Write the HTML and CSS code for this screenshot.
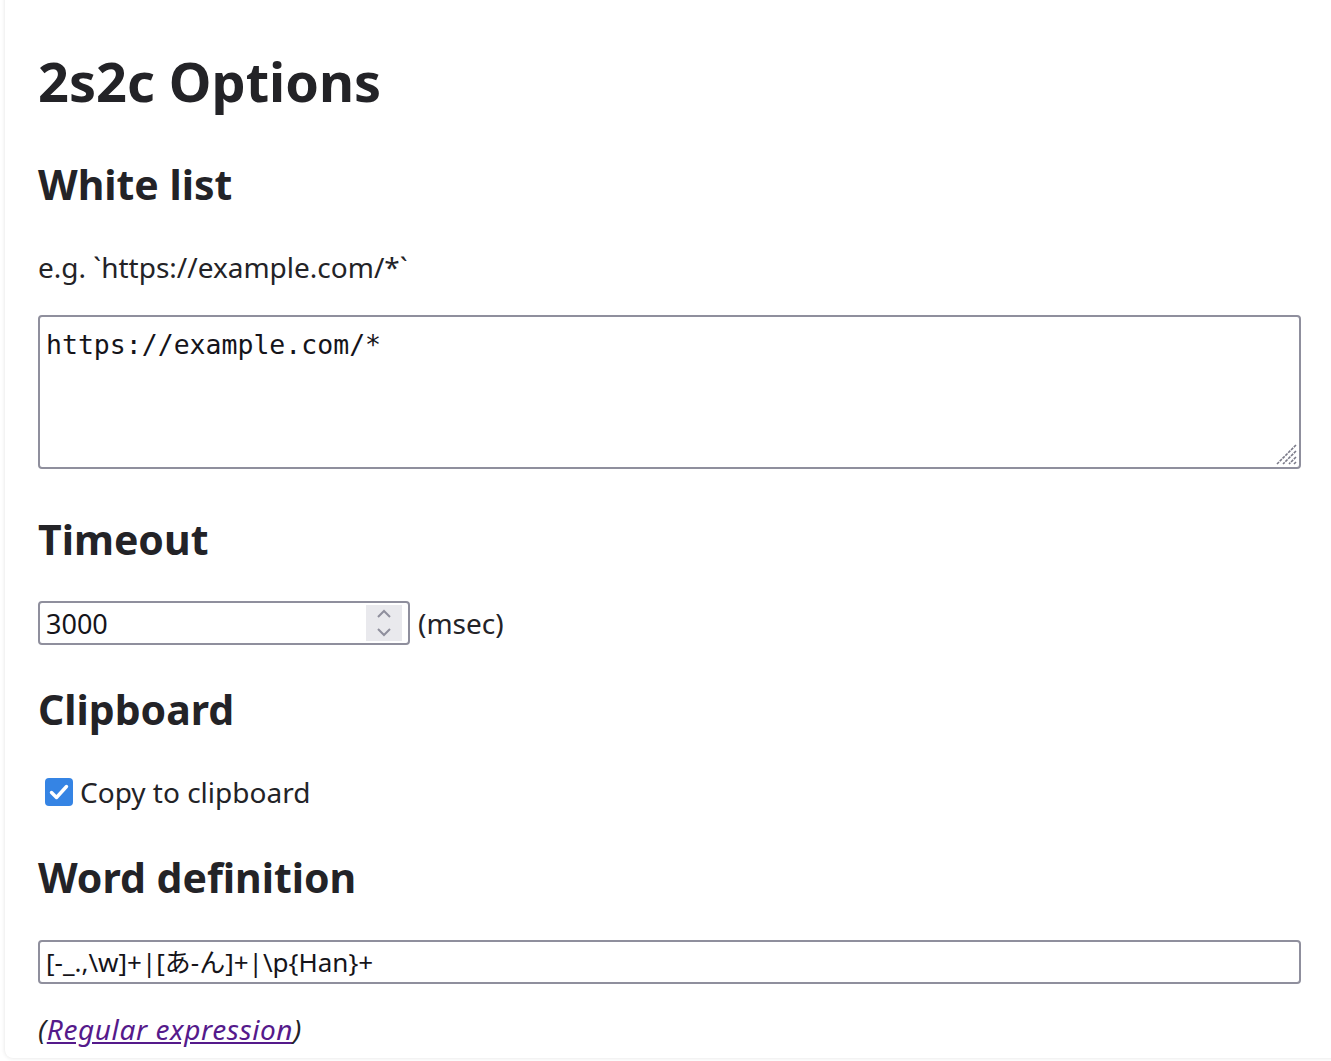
FILE: index.html
```html
<!DOCTYPE html>
<html lang="en">
<head>
<meta charset="utf-8">
<title>2s2c Options</title>
<link rel="stylesheet" href="styles.css">
</head>
<body>
<main class="card">
  <h1 class="title">2s2c Options</h1>

  <section class="section s-whitelist">
    <h2 class="heading">White list</h2>
    <p class="hint">e.g. `https://example.com/*`</p>
    <div class="textarea">
      <span class="mono">https://example.com/*</span>
      <svg class="grip" width="24" height="24" viewBox="0 0 24 24">
        <path d="M23 4 L4 23 M23 10 L10 23 M23 16 L16 23 M23 21 L21 23" stroke="#7a7a88" stroke-width="1.6" stroke-dasharray="3 1"/>
      </svg>
    </div>
  </section>

  <section class="section s-timeout">
    <h2 class="heading">Timeout</h2>
    <div class="row">
      <div class="number">
        <span class="value">3000</span>
        <span class="spinner">
          <svg width="20" height="34" viewBox="0 0 20 34">
            <path d="M4 11 L10 5 L16 11" fill="none" stroke="#8f8f9d" stroke-width="2"/>
            <path d="M4 23 L10 29 L16 23" fill="none" stroke="#8f8f9d" stroke-width="2"/>
          </svg>
        </span>
      </div>
      <span class="unit">(msec)</span>
    </div>
  </section>

  <section class="section s-clipboard">
    <h2 class="heading">Clipboard</h2>
    <label class="check">
      <span class="box">
        <svg width="28" height="28" viewBox="0 0 28 28">
          <path d="M6.5 14.5 L11.5 19.5 L21.5 8.5" fill="none" stroke="#fff" stroke-width="3.4" stroke-linecap="round" stroke-linejoin="round"/>
        </svg>
      </span>
      <span class="check-label">Copy to clipboard</span>
    </label>
  </section>

  <section class="section s-word">
    <h2 class="heading">Word definition</h2>
    <div class="text-input">[-_.,\w]+|[あ-ん]+|\p{Han}+</div>
    <p class="note">(<a class="link" href="#">Regular expression</a>)</p>
  </section>
</main>
</body>
</html>
```

FILE: styles.css
```css
html, body {
  margin: 0;
  padding: 0;
  overflow: hidden;
  background: #ffffff;
}

body {
  padding: 0 0 3px 5px;
  font-family: "Noto Sans", "Noto Sans CJK JP", sans-serif;
  color: #232327;
}

.card {
  margin-top: -20px;
  width: calc(100% + 20px);
  box-sizing: border-box;
  height: 1078px;
  padding: 20px 0 0 33px;
  background: #fff;
  border-radius: 8px;
  box-shadow: 0 0 4px rgba(0, 0, 0, 0.12);
}

.title {
  margin: 0;
  padding-top: 46px;
  font-size: 54px;
  line-height: 70px;
  font-weight: 700;
}

.heading {
  margin: 0;
  font-size: 41px;
  line-height: 50px;
  font-weight: 700;
}

.section {
  padding-right: 50px;
}

.s-whitelist { margin-top: 43px; }
.s-timeout { margin-top: 45px; }
.s-clipboard { margin-top: 39px; }
.s-word { margin-top: 41px; }

.hint {
  margin: 38px 0 0;
  font-size: 28px;
  line-height: 40px;
}

.textarea {
  position: relative;
  margin-top: 28px;
  height: 154px;
  box-sizing: border-box;
  border: 2px solid #8f8f9d;
  border-radius: 4px;
  padding: 8px 6px;
}

.mono {
  font-family: "DejaVu Sans Mono", monospace;
  font-size: 26.5px;
  line-height: 40px;
  color: #15141a;
}

.grip {
  position: absolute;
  right: 2px;
  bottom: 2px;
}

.row {
  display: flex;
  align-items: center;
  gap: 8px;
  margin-top: 37px;
}

.number {
  display: flex;
  align-items: center;
  justify-content: space-between;
  width: 372px;
  height: 44px;
  box-sizing: border-box;
  border: 2px solid #8f8f9d;
  border-radius: 4px;
  padding: 0 6px;
}

.value {
  font-size: 27px;
  color: #15141a;
}

.spinner {
  display: flex;
  align-items: center;
  justify-content: center;
  width: 36px;
  height: 36px;
  background: #e9e9ed;
}

.unit, .check-label, .note {
  font-size: 28px;
}

.check {
  display: flex;
  align-items: center;
  gap: 7px;
  padding-left: 7px;
  margin-top: 39px;
  line-height: 38px;
}

.box {
  display: flex;
  width: 28px;
  height: 28px;
  border-radius: 4px;
  background: #3584e4;
}

.text-input {
  margin-top: 38px;
  height: 44px;
  box-sizing: border-box;
  border: 2px solid #8f8f9d;
  border-radius: 4px;
  padding: 0 6px;
  font-size: 26px;
  line-height: 40px;
  color: #15141a;
}

.note {
  margin: 26px 0 0;
  font-style: italic;
  line-height: 38px;
  letter-spacing: 0.6px;
}

.link {
  color: #551a8b;
}
```
